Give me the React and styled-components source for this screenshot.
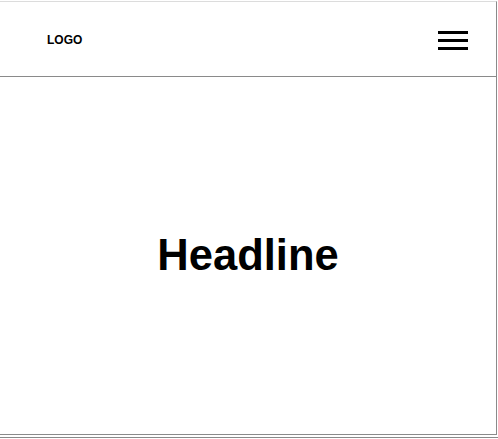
import React from "react";
import styled, { createGlobalStyle } from "styled-components";

const GlobalStyle = createGlobalStyle`
  html, body {
    margin: 0;
    padding: 0;
    background: #fff;
    font-family: "Liberation Sans", Arial, sans-serif;
  }
`;

const App = () => {
  return (
    <React.Fragment>
      <GlobalStyle />
      <Page>
        <Frame>
          <Header>
            <Logo>LOGO</Logo>
            <MenuButton aria-label="menu">
              <Bar />
              <Bar />
              <Bar />
            </MenuButton>
          </Header>
          <Hero>
            <Headline>Headline</Headline>
          </Hero>
        </Frame>
        <BottomRule />
      </Page>
    </React.Fragment>
  );
};

const Page = styled.div`
  width: 498px;
  height: 439px;
  padding-top: 1px;
  box-sizing: border-box;
  display: flex;
  flex-direction: column;
`;

const Frame = styled.div`
  width: 497px;
  height: 434px;
  box-sizing: border-box;
  border-top: 1px solid #dcdcdc;
  border-right: 1px solid #8a8a8a;
  border-bottom: 1px solid #8a8a8a;
  display: flex;
  flex-direction: column;
`;

const Header = styled.header`
  height: 75px;
  box-sizing: border-box;
  border-bottom: 1px solid #8a8a8a;
  display: flex;
  align-items: center;
  justify-content: space-between;
  padding: 0 28px 0 47px;
`;

const Logo = styled.div`
  font-size: 12px;
  font-weight: 700;
  color: #000;
  margin-top: 1px;
`;

const MenuButton = styled.div`
  width: 30px;
  display: flex;
  flex-direction: column;
  gap: 5px;
  margin-top: 3px;
`;

const Bar = styled.span`
  display: block;
  height: 3px;
  background: #000;
`;

const Hero = styled.main`
  flex: 1;
  display: flex;
  align-items: center;
  justify-content: center;
`;

const Headline = styled.h1`
  margin: 0;
  font-size: 43.5px;
  font-weight: 700;
  color: #000;
  line-height: 1;
`;

const BottomRule = styled.div`
  margin-top: 2px;
  height: 1px;
  width: 498px;
  background: #8a8a8a;
`;

export default App;
